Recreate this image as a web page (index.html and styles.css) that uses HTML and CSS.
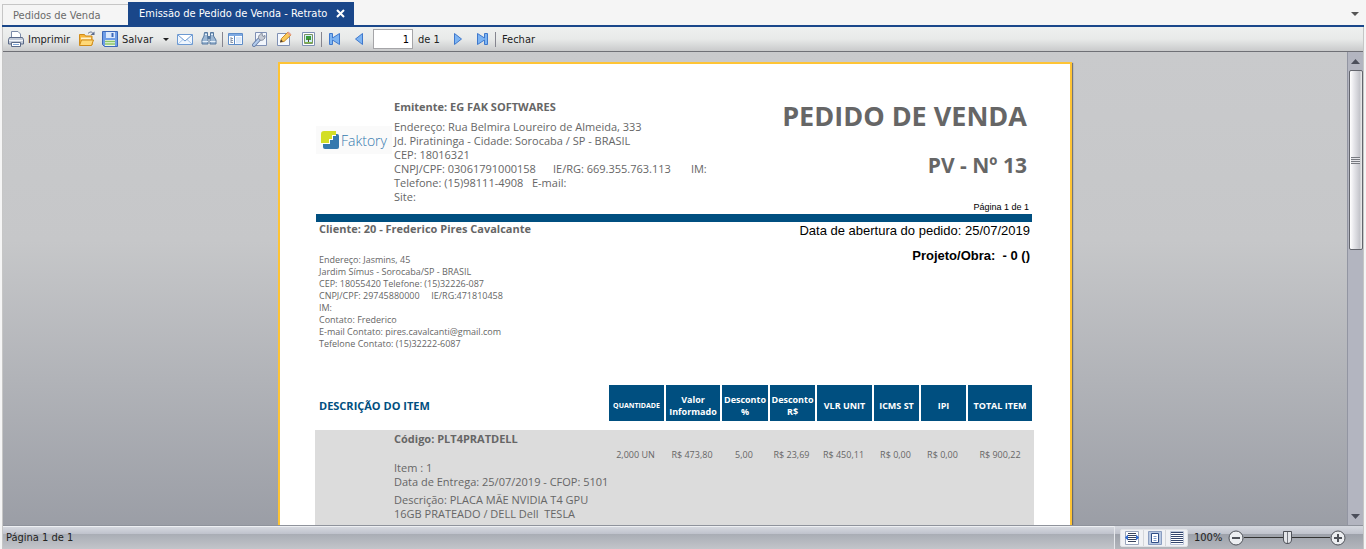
FILE: index.html
```
<!DOCTYPE html>
<html lang="pt-BR">
<head>
  <meta charset="UTF-8">
  <meta name="viewport" content="width=device-width, initial-scale=1.0">
  <title>Emissão de Pedido de Venda - Retrato</title>
  <link rel="stylesheet" href="styles.css">
</head>
<body>
  <!-- Tabs -->
  <nav class="tabs">
    <a href="#" class="tab">Pedidos de Venda</a>
    <div class="tab active">
      <a href="#">Emissão de Pedido de Venda - Retrato</a>
      <button type="button" class="tab-close" aria-label="Fechar aba">
        <svg width="9" height="9" viewBox="0 0 9 9"><path d="M1 1l7 7M8 1l-7 7" stroke="#fff" stroke-width="2"/></svg>
      </button>
    </div>
    <button type="button" class="tabs-menu" aria-label="Abas abertas">
      <svg width="8" height="4" viewBox="0 0 8 4"><path d="M0 0h8L4 4z" fill="#555"/></svg>
    </button>
  </nav>

  <div class="window">
    <!-- Toolbar -->
    <div class="toolbar">
      <button type="button" class="tool tool-text print">
        <svg width="16" height="16" viewBox="0 0 16 16">
          <path d="M3.500 7V.5h6.500l2.500 2.500v4z" fill="#fff" stroke="#7b8aa8"/>
          <path d="M1.500 6.500h13l1 2v4.500h-15V8.500z" fill="#c3cbd9" stroke="#5b6a88"/>
          <path d="M1 9.500h14" stroke="#f4f7fb"/>
          <path d="M3.500 11.500h9v4h-9z" fill="#fff" stroke="#5b6a88"/>
          <path d="M5 13.500h6" stroke="#7fa6d8"/>
        </svg>
        Imprimir
      </button>
      <button type="button" class="tool" aria-label="Abrir">
        <svg width="17" height="16" viewBox="0 0 17 16">
          <path d="M1.500 14V3.500h5l1 1.500h6.500v9z" fill="#f6b53a" stroke="#d08c1a"/>
          <path d="M3 7.500h10" stroke="#fff3cd" stroke-width="2"/>
          <path d="M1.500 14.500l2-5.500h12l-2 5.500z" fill="#ffd978" stroke="#d08c1a"/>
          <path d="M10 2.500c2-2 4-2 5 0" fill="none" stroke="#5b6b8c"/>
          <path d="M12.500 4h4V.5z" fill="#5b6b8c"/>
        </svg>
      </button>
      <button type="button" class="tool tool-text save">
        <svg width="16" height="16" viewBox="0 0 16 16">
          <path d="M.5.5h15v15h-13l-2-2z" fill="#6f9de6" stroke="#3c68b8"/>
          <path d="M4 1h9v6H4z" fill="#dce9fb"/>
          <path d="M9.500 2h2v4h-2z" fill="#3c68b8"/>
          <path d="M3 9h10v6H3z" fill="#eef7e6"/>
          <path d="M3 10.500h10M3 13h10" stroke="#8cc568" stroke-width="1.500"/>
        </svg>
        Salvar
      </button>
      <button type="button" class="tool tool-drop" aria-label="Formatos">
        <svg width="6" height="3" viewBox="0 0 6 3"><path d="M0 0h6L3 3z" fill="#222"/></svg>
      </button>
      <button type="button" class="tool" aria-label="Enviar por e-mail">
        <svg width="16" height="16" viewBox="0 0 16 16">
          <path d="M.5 3.500h15v10H.5z" fill="#eff6fe" stroke="#6d9ad2"/>
          <path d="M1 13l5.500-5M15 13L9.500 8" stroke="#a8c6ea"/>
          <path d="M1 4l7 6 7-6" fill="#fff" stroke="#6d9ad2"/>
        </svg>
      </button>
      <button type="button" class="tool" aria-label="Localizar">
        <svg width="16" height="16" viewBox="0 0 16 16">
          <path d="M3.500 1.500h3v4l.5 2v5.500H1V9l2-4zM9.500 1.500h3V5l2.500 4v4H9V7.500l.5-2z" fill="#9db8d4" stroke="#56799f"/>
          <path d="M6.500 5h3v3h-3z" fill="#56799f"/>
          <path d="M1.500 10.500H7M9 10.500h5.500M4 3.500h2M10 3.500h2" stroke="#e4eff9"/>
        </svg>
      </button>
      <span class="sep"></span>
      <button type="button" class="tool" aria-label="Miniaturas">
        <svg width="16" height="16" viewBox="0 0 16 16">
          <path d="M.5 2.500h14v11H.5z" fill="#fff" stroke="#5d8cc8"/>
          <path d="M1 3h13v2H1z" fill="#7eaae2"/>
          <path d="M6.500 5v8" stroke="#5d8cc8"/>
          <path d="M3 6v6M3 7.500h2M3 9.500h2M3 11.500h2" stroke="#8794a8"/>
          <path d="M8 6h5.500v6.500H8z" fill="#dbe9fa"/>
        </svg>
      </button>
      <button type="button" class="tool" aria-label="Opções">
        <svg width="16" height="16" viewBox="0 0 16 16">
          <path d="M3.500 1.500h11v13h-11z" fill="#f2f6fc" stroke="#7f90b4"/>
          <path d="M2 14L7 8.500" stroke="#6a80a8" stroke-width="4" stroke-linecap="round"/>
          <path d="M2 14L7 8.500" stroke="#b4cdee" stroke-width="2" stroke-linecap="round"/>
          <path d="M8 3.500c2-2 3-1 2 .5l1 1.500 2-1c.5 4-3 5.500-5 4.500C6 8 6 5 8 3.500z" fill="#c8ccd5" stroke="#7f899a"/>
        </svg>
      </button>
      <button type="button" class="tool" aria-label="Editar">
        <svg width="16" height="16" viewBox="0 0 16 16">
          <path d="M1.500 2.500h12v12h-12z" fill="#f5f9fe" stroke="#7f90b4"/>
          <path d="M4.500 11l1-3.500L12 1l3 3-7 6.500z" fill="#f9c95a" stroke="#c98a2a"/>
          <path d="M11 2l3 3 1.500-1.500-3-3z" fill="#e6a08a"/>
          <path d="M4 11.500l1-3 2 2z" fill="#443c34"/>
        </svg>
      </button>
      <button type="button" class="tool" aria-label="Marca d'água">
        <svg width="16" height="16" viewBox="0 0 16 16">
          <path d="M2.500 1.500h12v13h-12z" fill="#fff" stroke="#7f90b4"/>
          <path d="M4.500 3.500h8v9h-8z" fill="#d4eefb" stroke="#7a9464"/>
          <path d="M6 5h5v4H6z" fill="#3b9a38"/>
          <path d="M8 8h1v3H8z" fill="#5b4a2c"/>
          <path d="M5 11.500h7" stroke="#79ba4a"/>
        </svg>
      </button>
      <span class="sep"></span>
      <button type="button" class="tool" aria-label="Primeira página">
        <svg width="12" height="12" viewBox="0 0 12 12"><path d="M.5.500h3v4.500L10.500.5v11L3.500 7v4.500h-3z" fill="#7db4f2" stroke="#3f78cc"/></svg>
      </button>
      <button type="button" class="tool" aria-label="Página anterior">
        <svg width="8" height="12" viewBox="0 0 8 12"><path d="M7.500.5v11L.5 6z" fill="#7db4f2" stroke="#3f78cc"/></svg>
      </button>
      <input type="text" class="page-number" value="1" aria-label="Página">
      <span class="page-total">de 1</span>
      <button type="button" class="tool" aria-label="Próxima página">
        <svg width="8" height="12" viewBox="0 0 8 12"><path d="M.5.5v11l7-5.500z" fill="#7db4f2" stroke="#3f78cc"/></svg>
      </button>
      <button type="button" class="tool" aria-label="Última página">
        <svg width="12" height="12" viewBox="0 0 12 12"><path d="M11.500.5h-3v4.500L1.500.5v11l7-4.500v4.500h3z" fill="#7db4f2" stroke="#3f78cc"/></svg>
      </button>
      <span class="sep"></span>
      <button type="button" class="tool tool-text close">Fechar</button>
    </div>

    <!-- Preview -->
    <div class="preview">
      <div class="canvas">
        <main class="sheet">
          <header class="sheet-header">
            <div class="logo">
              <svg width="18" height="19" viewBox="0 0 18 19">
                <path d="M5 3h11q2 0 2 2v11q0 2-2 2H4q-2 0-2-2v-3z" fill="#3579ae"/>
                <path d="M2 0h13v5h-3v4H9v4H1V2q0-2 2-2z" fill="#fff"/>
                <path d="M3 0h12v4h-4v4H8v4H0V3q0-3 3-3z" fill="#d3de26"/>
              </svg>
              <span>Faktory</span>
            </div>
            <div class="issuer">
              <h2>Emitente: EG FAK SOFTWARES</h2>
              <p>Endereço: Rua Belmira Loureiro de Almeida, 333
Jd. Piratininga - Cidade: Sorocaba / SP - BRASIL
CEP: 18016321
CNPJ/CPF: 03061791000158      IE/RG: 669.355.763.113       IM:
Telefone: (15)98111-4908   E-mail:
Site:</p>
            </div>
            <div class="order">
              <h1>PEDIDO DE VENDA</h1>
              <p class="order-number">PV - Nº 13</p>
              <p class="order-page">Página 1 de 1</p>
            </div>
          </header>

          <section class="client">
            <div>
              <h2>Cliente: 20 - Frederico Pires Cavalcante</h2>
              <p class="client-data">Endereço: Jasmins, 45
Jardim Símus - Sorocaba/SP - BRASIL
CEP: 18055420 Telefone: (15)32226-087
CNPJ/CPF: 29745880000     IE/RG:471810458
IM:
Contato: Frederico
E-mail Contato: pires.cavalcanti@gmail.com
Tefelone Contato: (15)32222-6087</p>
            </div>
            <div class="opening">
              <p>Data de abertura do pedido: 25/07/2019</p>
              <p class="project">Projeto/Obra:  - 0 ()</p>
            </div>
          </section>

          <table class="items">
            <colgroup>
              <col class="col-item">
              <col class="col-wide">
              <col class="col-informed">
              <col class="col-percent">
              <col>
              <col class="col-wide">
              <col>
              <col>
              <col class="col-total">
            </colgroup>
            <thead>
              <tr>
                <th class="item-title">DESCRIÇÃO DO ITEM</th>
                <th class="small">QUANTIDADE</th>
                <th>Valor Informado</th>
                <th>Desconto %</th>
                <th>Desconto R$</th>
                <th>VLR UNIT</th>
                <th>ICMS ST</th>
                <th>IPI</th>
                <th>TOTAL ITEM</th>
              </tr>
            </thead>
            <tbody>
              <tr>
                <td class="item">
                  <h2>Código: PLT4PRATDELL</h2>
                  <p>Item : 1
Data de Entrega: 25/07/2019 - CFOP: 5101</p>
                  <p class="item-desc">Descrição: PLACA MÃE NVIDIA T4 GPU
16GB PRATEADO / DELL Dell  TESLA</p>
                </td>
                <td>2,000 UN</td>
                <td>R$ 473,80</td>
                <td>5,00</td>
                <td>R$ 23,69</td>
                <td>R$ 450,11</td>
                <td>R$ 0,00</td>
                <td>R$ 0,00</td>
                <td>R$ 900,22</td>
              </tr>
            </tbody>
          </table>
        </main>
      </div>
      <div class="scrollbar">
        <button type="button" class="scroll-arrow" aria-label="Rolar para cima">
          <svg width="9" height="5" viewBox="0 0 9 5"><path d="M0 5h9L4.500 0z" fill="#4b4e5a"/></svg>
        </button>
        <div class="thumb"><span></span></div>
        <button type="button" class="scroll-arrow down" aria-label="Rolar para baixo">
          <svg width="9" height="5" viewBox="0 0 9 5"><path d="M0 0h9L4.500 5z" fill="#4b4e5a"/></svg>
        </button>
      </div>
    </div>

    <!-- Status bar -->
    <footer class="status">
      <span class="status-page">Página 1 de 1</span>
      <div class="zoom">
        <div class="views">
          <button type="button" aria-label="Largura da página">
            <svg width="14" height="14" viewBox="0 0 14 14">
              <path d="M.5.5h13v13H.5z" fill="#fff" stroke="#9aa6bd"/>
              <path d="M3 2.500h8M3 4.500h8M3 6.500h8M3 8.500h8M3 10.500h8" stroke="#38445e"/>
              <path d="M0 6.500L3 3.500v6zM14 6.500L11 3.500v6z" fill="#2f6ad0"/>
            </svg>
          </button>
          <button type="button" aria-label="Página inteira">
            <svg width="14" height="14" viewBox="0 0 14 14">
              <path d="M.5.5h13v13H.5z" fill="#b8c8e2" stroke="#8a9dc0"/>
              <path d="M3.500 2.500h7v9h-7z" fill="#fff" stroke="#2f4d86"/>
              <path d="M5.500 5.500h3M5.500 7.500h3M5.500 9.500h3" stroke="#7d9acb"/>
            </svg>
          </button>
          <button type="button" aria-label="Tamanho real">
            <svg width="14" height="14" viewBox="0 0 14 14">
              <path d="M.5.5h13v13H.5z" fill="#fff" stroke="#b8c3d8"/>
              <path d="M1 1.500h12M1 3.500h12M1 5.500h12M1 7.500h12M1 9.500h12M1 11.500h12" stroke="#34466e"/>
            </svg>
          </button>
        </div>
        <label for="zoom">100%</label>
        <button type="button" class="zoom-btn" aria-label="Diminuir zoom">
          <svg width="16" height="16" viewBox="0 0 16 16"><circle cx="8" cy="8" r="7" fill="#eceef1" stroke="#4f5259"/><path d="M4 8h8" stroke="#4f5259" stroke-width="2"/></svg>
        </button>
        <input type="range" id="zoom" min="0" max="200" value="100">
        <button type="button" class="zoom-btn" aria-label="Aumentar zoom">
          <svg width="16" height="16" viewBox="0 0 16 16"><circle cx="8" cy="8" r="7" fill="#eceef1" stroke="#4f5259"/><path d="M4 8h8M8 4v8" stroke="#4f5259" stroke-width="2"/></svg>
        </button>
      </div>
    </footer>
  </div>
</body>
</html>
```
FILE: styles.css
```
* {
  margin: 0;
  padding: 0;
  box-sizing: border-box;
}

body {
  height: 100vh;
  overflow: hidden;
  display: flex;
  flex-direction: column;
  padding: 0 2px;
  background: #f5f5f5;
  color: #222;
  font-family: "DejaVu Sans Condensed", "DejaVu Sans", sans-serif;
  font-size: 11px;
  white-space: nowrap;
}

button {
  display: flex;
  align-items: center;
  justify-content: center;
  border: none;
  background: none;
  color: inherit;
  font: inherit;
  cursor: pointer;
}

a {
  color: inherit;
  text-decoration: none;
}

/* Tabs */
.tabs {
  display: flex;
  align-items: flex-end;
  height: 27px;
  border-bottom: 2px solid #1a478a;
}

.tab {
  display: flex;
  align-items: center;
  width: 126px;
  height: 21px;
  padding-left: 10px;
  border: 1px solid #c6c6c6;
  border-width: 1px 0 0 1px;
  color: #6a6a6a;
}

.tab.active {
  width: 226px;
  height: 23px;
  padding-left: 11px;
  border: none;
  background: #1a478a;
  color: #fff;
}

.tab a {
  width: 192px;
}

.tab-close {
  padding: 4px 5px;
}

.tabs-menu {
  width: 18px;
  height: 23px;
  margin-left: auto;
}

.window {
  flex: 1;
  min-height: 0;
  display: flex;
  flex-direction: column;
  border: 1px solid #c6c6c6;
  border-width: 0 1px;
}

/* Toolbar */
.toolbar {
  display: flex;
  align-items: center;
  height: 25px;
  border-bottom: 1px solid #6f7076;
  background: linear-gradient(#eef0ef, #e8eae9 50%, #c9cacb);
}

.tool {
  flex: none;
  width: 24px;
  height: 24px;
}

.tool-text {
  justify-content: flex-start;
  width: auto;
  gap: 4px;
}

.print {
  width: 71px;
  padding-left: 5px;
}

.save {
  width: 60px;
  padding-left: 4px;
}

.tool-drop {
  width: 15px;
}

.close {
  padding: 0 5px;
}

.sep {
  width: 1px;
  height: 15px;
  margin: 0 1px;
  background: #85858f;
}

.page-number {
  width: 40px;
  height: 20px;
  margin-left: 2px;
  padding-right: 3px;
  border: 1px solid #a5a5a8;
  background: #fff;
  color: #000;
  font: inherit;
  text-align: right;
}

.page-total {
  width: 33px;
  padding-left: 5px;
}

/* Preview */
.preview {
  flex: 1;
  min-height: 0;
  display: flex;
}

.canvas {
  flex: 1;
  overflow: hidden;
  padding-top: 10px;
  background: linear-gradient(#c9cacc, #c6c7c9 40%, #9b9ea6);
}

.sheet {
  width: 794px;
  min-height: 1123px;
  margin: 0 auto;
  padding: 35px 38px 35px 36px;
  border: 2px solid #fec435;
  background: #fff;
  box-shadow: 1px 1px 1px rgba(80, 80, 85, 0.7);
  color: #666;
  font-family: "Open Sans", sans-serif;
}

.sheet h2 {
  font-size: 11px;
  font-weight: 700;
  line-height: 16px;
}

.sheet p {
  font-size: 11px;
  line-height: 14px;
  white-space: pre;
}

.sheet-header {
  display: flex;
  height: 123px;
  border-bottom: 8px solid #004f80;
}

.logo {
  display: flex;
  align-items: center;
  width: 76px;
  height: 28px;
  margin: 27px 2px 0 0;
  padding-left: 5px;
  gap: 2px;
  background: #fafafa;
  color: #3579ae;
  font-family: "Open Sans", sans-serif;
  font-size: 14px;
  font-weight: 300;
}

.issuer p {
  margin-top: 5px;
}

.order {
  flex: 1;
  text-align: right;
}

.order h1 {
  padding-right: 5px;
  font-size: 27px;
  line-height: 34px;
}

.sheet .order-number {
  padding: 18px 5px 0 0;
  font-size: 21px;
  font-weight: 700;
  line-height: 28px;
}

.sheet .order-page {
  padding: 22px 3px 0 0;
  color: #000;
  font-family: "Liberation Sans", sans-serif;
  font-size: 9px;
  line-height: 12px;
}

.client {
  display: flex;
  justify-content: space-between;
  height: 163px;
  padding: 0 2px 0 3px;
}

.client h2 {
  line-height: 14px;
}

.sheet .client-data {
  margin-top: 18px;
  font-size: 9px;
  line-height: 12px;
}

.opening {
  color: #000;
  text-align: right;
}

.sheet .opening p {
  font-family: "Liberation Sans", sans-serif;
  font-size: 13px;
  line-height: 17px;
}

.sheet .opening .project {
  margin-top: 8px;
  font-weight: 700;
}

/* Items */
.items {
  width: 719px;
  margin-left: -1px;
  table-layout: fixed;
  border-spacing: 0;
}

.items col {
  width: 47px;
}

.items .col-item {
  width: 292px;
}

.items .col-wide {
  width: 57px;
}

.items .col-informed {
  width: 56px;
}

.items .col-percent {
  width: 48px;
}

.items .col-total {
  width: 68px;
}

.items th {
  height: 45px;
  padding-top: 6px;
  border: solid #fff;
  border-width: 0 0 9px 2px;
  background: #004f80;
  color: #fff;
  font-size: 9px;
  line-height: 12px;
  white-space: normal;
}

.items th:last-child {
  border-right: 2px solid #fff;
}

.items .small {
  font-size: 7px;
}

.items .item-title {
  padding-left: 2px;
  background: none;
  color: #004f80;
  font-size: 11px;
  text-align: left;
}

.items td {
  height: 180px;
  padding-top: 19px;
  background: #dcdcdc;
  font-size: 9px;
  line-height: 12px;
  text-align: center;
  vertical-align: top;
}

.items .item {
  padding: 1px 0 0 79px;
  text-align: left;
}

.item h2 {
  margin-bottom: 14px;
}

.item .item-desc {
  margin-top: 4px;
}

/* Scrollbar */
.scrollbar {
  display: flex;
  flex-direction: column;
  align-items: center;
  width: 16px;
  border-left: 1px solid #9295a2;
  background: #b3b5c0;
}

.scroll-arrow {
  width: 15px;
  height: 18px;
}

.thumb {
  display: flex;
  align-items: center;
  justify-content: center;
  width: 14px;
  height: 180px;
  border: 1px solid #63656d;
  border-radius: 2px;
  background: linear-gradient(90deg, #fff, #e8e8ec 30%, #c5c6cc 80%, #eee);
}

.thumb span {
  width: 9px;
  height: 7px;
  background: repeating-linear-gradient(#777a80 0 1px, #e4e4e8 1px 2px);
}

.scroll-arrow.down {
  margin-top: auto;
}

/* Status bar */
.status {
  display: flex;
  align-items: center;
  justify-content: space-between;
  height: 24px;
  padding-left: 3px;
  border-top: 1px solid #8f939c;
  background: linear-gradient(#eef0f3 0 1px, #d5d8df 1px, #bfc2cc 8px, #a9adb5 8px, #c3c5ca);
}

.zoom {
  display: flex;
  align-items: center;
  height: 23px;
  padding: 0 17px 0 5px;
  border-left: 1px solid #e6e8ec;
  background: linear-gradient(#d5d8df 0, #bfc2cc 8px, #9da1aa 8px, #b3b6bc);
}

.views {
  display: flex;
  margin-right: 6px;
  border: 1px solid #e0e2e6;
  border-radius: 2px;
  background: #f0f1f4;
}

.views button {
  width: 22px;
  height: 16px;
}

.views button + button {
  border-left: 1px solid #d4d6da;
}

.zoom label {
  width: 34px;
}

.zoom-btn {
  width: 16px;
  height: 16px;
}

.zoom input {
  width: 86px;
  height: 16px;
  appearance: none;
  background: linear-gradient(#333, #333) center / 100% 1px no-repeat;
}

.zoom input::-webkit-slider-thumb {
  appearance: none;
  width: 9px;
  height: 13px;
  border: 1px solid #4f5259;
  border-radius: 1px 1px 5px 5px;
  background: linear-gradient(90deg, #e4e6ea 3px, #777a82 3px 4px, #e4e6ea 4px);
}
```
